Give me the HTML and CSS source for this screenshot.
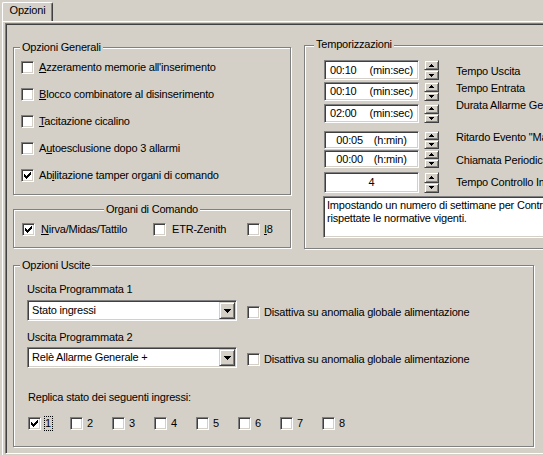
FILE: index.html
```html
<!DOCTYPE html>
<html lang="it">
<head>
<meta charset="utf-8">
<title>Opzioni</title>
<link rel="stylesheet" href="styles.css">
</head>
<body>
<div class="window">
  <div class="tabstrip"><div class="tab">Opzioni</div></div>
  <div class="panel">
    <div class="frame">
      <div class="top-row">
        <div class="left-col">
          <div class="group g-gen">
            <span class="legend">Opzioni Generali</span>
            <div class="cb-row"><span class="cb"></span><span class="lbl"><u>A</u>zzeramento memorie all'inserimento</span></div>
            <div class="cb-row"><span class="cb"></span><span class="lbl"><u>B</u>locco combinatore al disinserimento</span></div>
            <div class="cb-row"><span class="cb"></span><span class="lbl"><u>T</u>acitazione cicalino</span></div>
            <div class="cb-row"><span class="cb"></span><span class="lbl">A<u>u</u>toesclusione dopo 3 allarmi</span></div>
            <div class="cb-row"><span class="cb"><svg class="chk" width="7" height="7" viewBox="0 0 7 7"><path d="M0 2h1v3h-1z M1 3h1v3h-1z M2 4h1v3h-1z M3 3h1v3h-1z M4 2h1v3h-1z M5 1h1v3h-1z M6 0h1v3h-1z"/></svg></span><span class="lbl">Ab<u>i</u>litazione tamper organi di comando</span></div>
          </div>
          <div class="group g-org">
            <span class="legend centered">Organi di Comando</span>
            <div class="org-row">
              <div class="org-item w1"><span class="cb"><svg class="chk" width="7" height="7" viewBox="0 0 7 7"><path d="M0 2h1v3h-1z M1 3h1v3h-1z M2 4h1v3h-1z M3 3h1v3h-1z M4 2h1v3h-1z M5 1h1v3h-1z M6 0h1v3h-1z"/></svg></span><span class="lbl l6"><u>N</u>irva/Midas/Tattilo</span></div>
              <div class="org-item w2"><span class="cb"></span><span class="lbl l6">ETR-Zenith</span></div>
              <div class="org-item"><span class="cb"></span><span class="lbl l4"><u>I</u>8</span></div>
            </div>
          </div>
        </div>
        <div class="group g-temp">
          <span class="legend wide">Temporizzazioni</span>
          <div class="temp-body">
            <div class="temp-inputs">
              <div class="trow r1"><div class="edit">00:10<span class="sp1"></span>(min:sec)</div><div class="spin"><div class="sbtn"><svg width="5" height="3" viewBox="0 0 5 3"><path d="M2 0h1v1h-1z M1 1h3v1h-3z M0 2h5v1h-5z"/></svg></div><div class="sbtn"><svg width="5" height="3" viewBox="0 0 5 3"><path d="M0 0h5v1h-5z M1 1h3v1h-3z M2 2h1v1h-1z"/></svg></div></div></div>
              <div class="trow r2"><div class="edit">00:10<span class="sp1"></span>(min:sec)</div><div class="spin"><div class="sbtn"><svg width="5" height="3" viewBox="0 0 5 3"><path d="M2 0h1v1h-1z M1 1h3v1h-3z M0 2h5v1h-5z"/></svg></div><div class="sbtn"><svg width="5" height="3" viewBox="0 0 5 3"><path d="M0 0h5v1h-5z M1 1h3v1h-3z M2 2h1v1h-1z"/></svg></div></div></div>
              <div class="trow r3"><div class="edit">02:00<span class="sp1"></span>(min:sec)</div><div class="spin"><div class="sbtn"><svg width="5" height="3" viewBox="0 0 5 3"><path d="M2 0h1v1h-1z M1 1h3v1h-3z M0 2h5v1h-5z"/></svg></div><div class="sbtn"><svg width="5" height="3" viewBox="0 0 5 3"><path d="M0 0h5v1h-5z M1 1h3v1h-3z M2 2h1v1h-1z"/></svg></div></div></div>
              <div class="trow r4"><div class="edit">00:05<span class="sp2"></span>(h:min)</div><div class="spin"><div class="sbtn"><svg width="5" height="3" viewBox="0 0 5 3"><path d="M2 0h1v1h-1z M1 1h3v1h-3z M0 2h5v1h-5z"/></svg></div><div class="sbtn"><svg width="5" height="3" viewBox="0 0 5 3"><path d="M0 0h5v1h-5z M1 1h3v1h-3z M2 2h1v1h-1z"/></svg></div></div></div>
              <div class="trow r5"><div class="edit">00:00<span class="sp2"></span>(h:min)</div><div class="spin"><div class="sbtn"><svg width="5" height="3" viewBox="0 0 5 3"><path d="M2 0h1v1h-1z M1 1h3v1h-3z M0 2h5v1h-5z"/></svg></div><div class="sbtn"><svg width="5" height="3" viewBox="0 0 5 3"><path d="M0 0h5v1h-5z M1 1h3v1h-3z M2 2h1v1h-1z"/></svg></div></div></div>
              <div class="trow r6"><div class="edit">4</div><div class="spin"><div class="sbtn"><svg width="5" height="3" viewBox="0 0 5 3"><path d="M2 0h1v1h-1z M1 1h3v1h-3z M0 2h5v1h-5z"/></svg></div><div class="sbtn"><svg width="5" height="3" viewBox="0 0 5 3"><path d="M0 0h5v1h-5z M1 1h3v1h-3z M2 2h1v1h-1z"/></svg></div></div></div>
            </div>
            <div class="temp-labels">
              <div class="tl t1">Tempo Uscita</div>
              <div class="tl t2">Tempo Entrata</div>
              <div class="tl t3">Durata Allarme Generale</div>
              <div class="tl t4">Ritardo Evento "Mancanza Rete"</div>
              <div class="tl t5">Chiamata Periodica</div>
              <div class="tl t6">Tempo Controllo Impianto</div>
            </div>
          </div>
          <div class="info">Impostando un numero di settimane per Controllo Impianto diverso da 4 non vengono<br>rispettate le normative vigenti.</div>
        </div>
      </div>
      <div class="group g-usc">
        <span class="legend">Opzioni Uscite</span>
        <div class="usc-label">Uscita Programmata 1</div>
        <div class="combo-row">
          <div class="combo"><span class="combo-text">Stato ingressi</span><span class="combo-btn"><svg width="7" height="4" viewBox="0 0 7 4"><path d="M0 0h7v1h-7z M1 1h5v1h-5z M2 2h3v1h-3z M3 3h1v1h-1z"/></svg></span></div>
          <span class="cb"></span><span class="lbl l4">Disattiva su anomalia globale alimentazione</span>
        </div>
        <div class="usc-label second">Uscita Programmata 2</div>
        <div class="combo-row second">
          <div class="combo"><span class="combo-text">Relè Allarme Generale +</span><span class="combo-btn"><svg width="7" height="4" viewBox="0 0 7 4"><path d="M0 0h7v1h-7z M1 1h5v1h-5z M2 2h3v1h-3z M3 3h1v1h-1z"/></svg></span></div>
          <span class="cb"></span><span class="lbl l4">Disattiva su anomalia globale alimentazione</span>
        </div>
        <div class="replica-label">Replica stato dei seguenti ingressi:</div>
        <div class="replica-row">
          <div class="rep-item"><span class="cb"><svg class="chk" width="7" height="7" viewBox="0 0 7 7"><path d="M0 2h1v3h-1z M1 3h1v3h-1z M2 4h1v3h-1z M3 3h1v3h-1z M4 2h1v3h-1z M5 1h1v3h-1z M6 0h1v3h-1z"/></svg></span><span class="rep-lbl focus">1</span></div>
          <div class="rep-item"><span class="cb"></span><span class="rep-lbl">2</span></div>
          <div class="rep-item"><span class="cb"></span><span class="rep-lbl">3</span></div>
          <div class="rep-item"><span class="cb"></span><span class="rep-lbl">4</span></div>
          <div class="rep-item"><span class="cb"></span><span class="rep-lbl">5</span></div>
          <div class="rep-item"><span class="cb"></span><span class="rep-lbl">6</span></div>
          <div class="rep-item"><span class="cb"></span><span class="rep-lbl">7</span></div>
          <div class="rep-item"><span class="cb"></span><span class="rep-lbl">8</span></div>
        </div>
      </div>
    </div>
  </div>
</div>
</body>
</html>
```

FILE: styles.css
```css
* { box-sizing: border-box; }
html, body { margin: 0; padding: 0; }
body {
  background: #D4D0C8;
  font-family: "Liberation Sans", Arial, sans-serif;
  font-size: 11px;
  line-height: 13px;
  letter-spacing: -0.2px;
  color: #000;
}
.window { width: 543px; height: 455px; overflow: hidden; background: #D4D0C8; }

/* tab */
.tabstrip { display: flex; height: 21px; padding: 2px 0 0 2px; }
.tab {
  width: 51px; height: 19px;
  background: #D4D0C8;
  border-top: 1px solid #fff; border-left: 1px solid #fff; border-right: 1px solid #404040;
  border-top-left-radius: 2px; border-top-right-radius: 2px;
  box-shadow: inset -1px 0 #808080;
  text-align: center; padding-top: 1px;
}
.panel {
  margin-left: 2px; height: 434px;
  border-top: 1px solid #fff; border-left: 1px solid #fff;
  padding: 1px 0 0 2px;
}
.frame {
  width: 560px; height: 431px;
  border: 1px solid; border-color: #808080 #fff #fff #808080;
  box-shadow: inset 1px 1px #404040;
  padding: 0 0 0 7px;
}

/* layout */
.top-row { display: flex; align-items: flex-start; }
.left-col { width: 281px; display: flex; flex-direction: column; }

/* group boxes */
.group {
  position: relative;
  border: 1px solid #808080;
  box-shadow: inset 1px 1px #fff, 1px 1px #fff;
}
.legend {
  position: absolute; top: -7px; left: 6px;
  padding: 0 2px; background: #D4D0C8; white-space: nowrap;
}
.legend.centered { left: 50%; transform: translateX(-50%); }
.legend.wide { left: 9px; top: -8px; }

.g-gen { margin-top: 23px; height: 148px; padding: 6px 0 0 7px; }
.g-org { margin-top: 14px; height: 39px; padding: 6px 0 0 8px; }
.g-temp { margin: 21px 0 0 13px; width: 260px; height: 204px; }
.g-usc { margin-top: 16px; width: 521px; height: 182px; padding: 17px 0 0 13px; }

/* checkbox */
.cb {
  flex: none;
  width: 13px; height: 13px;
  background: #fff;
  border: 1px solid; border-color: #808080 #fff #fff #808080;
  box-shadow: inset 1px 1px #404040, inset -1px -1px #D4D0C8;
  display: flex;
}
.chk { margin: 2px 0 0 2px; fill: #000; shape-rendering: crispEdges; }
.lbl { white-space: nowrap; margin-left: 5px; }
.lbl.l6 { margin-left: 6px; }
.lbl.l4 { margin-left: 4px; }
u { text-decoration-thickness: 1px; text-underline-offset: 1px; }

.cb-row { height: 27px; display: flex; align-items: center; }
.org-row { height: 27px; display: flex; align-items: center; }
.org-item { display: flex; align-items: center; }
.org-item.w1 { width: 131px; }
.org-item.w2 { width: 94px; }

/* sunken / raised */
.edit, .info, .combo {
  background: #fff;
  border: 1px solid; border-color: #808080 #fff #fff #808080;
  box-shadow: inset 1px 1px #404040, inset -1px -1px #D4D0C8;
}
.sbtn, .combo-btn {
  background: #D4D0C8;
  border: 1px solid; border-color: #D4D0C8 #404040 #404040 #D4D0C8;
  box-shadow: inset 1px 1px #fff, inset -1px -1px #808080;
  display: flex; align-items: center; justify-content: center;
}
.sbtn svg, .combo-btn svg { fill: #000; shape-rendering: crispEdges; }

/* temporizzazioni */
.temp-body { display: flex; margin: 14px 0 0 19px; }
.temp-inputs { display: flex; flex-direction: column; }
.trow { display: flex; }
.trow.r1 { height: 20px; }
.trow.r2 { height: 19px; margin-top: 2px; }
.trow.r3 { height: 19px; margin-top: 3px; }
.trow.r4 { height: 18px; margin-top: 8px; }
.trow.r5 { height: 18px; margin-top: 1px; }
.trow.r6 { height: 21px; margin-top: 4px; }
.edit {
  width: 95px; height: 100%;
  display: flex; align-items: center; justify-content: center;
  white-space: nowrap;
}
.sp1 { display: inline-block; width: 13px; }
.sp2 { display: inline-block; width: 11px; }
.spin { width: 15px; margin-left: 5px; display: flex; flex-direction: column; }
.sbtn { flex: 1; }
.temp-labels { margin-left: 17px; display: flex; flex-direction: column; white-space: nowrap; }
.tl.t1 { margin-top: 5px; }
.tl.t2 { margin-top: 4px; }
.tl.t3 { margin-top: 4px; }
.tl.t4 { margin-top: 19px; }
.tl.t5 { margin-top: 10px; }
.tl.t6 { margin-top: 9px; }
.info {
  margin: 3px 0 0 18px; width: 260px; height: 42px;
  padding: 2px 0 0 3px; white-space: nowrap;
}

/* opzioni uscite */
.usc-label { height: 13px; }
.usc-label.second { margin-top: 10px; }
.combo-row { display: flex; align-items: flex-start; margin-top: 4px; }
.combo-row.second { margin-top: 3px; }
.combo-row .cb { margin: 6px 0 0 10px; }
.combo-row .lbl { margin-top: 6px; }
.combo {
  width: 210px; height: 21px;
  display: flex; align-items: center;
  padding-left: 4px;
}
.combo-text { white-space: nowrap; }
.combo-btn { margin-left: auto; margin-right: 1px; width: 16px; height: 17px; }
.replica-label { margin: 23px 0 0 1px; }
.replica-row { display: flex; align-items: center; height: 15px; margin: 12px 0 0 1px; }
.rep-item { width: 42px; display: flex; align-items: center; flex: none; }
.rep-lbl { margin-left: 3px; border: 1px solid transparent; padding: 0 1px 0 0; line-height: 13px; }
.rep-lbl.focus { border: 1px dotted #000; }
```
